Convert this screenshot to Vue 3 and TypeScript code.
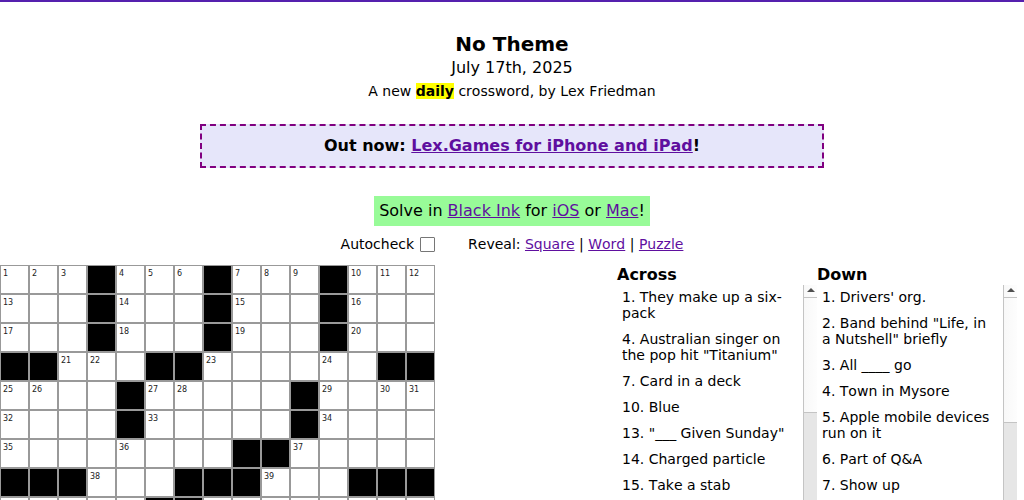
<template>
  <div class="page">
    <header class="head">
      <h1 class="title">No Theme</h1>
      <p class="date">July 17th, 2025</p>
      <p class="byline">A new <b class="daily">daily</b> crossword, by Lex Friedman</p>
    </header>

    <div class="promo">Out now: <a href="#">Lex.Games for iPhone and iPad</a>!</div>

    <div class="solve">Solve in <a href="#">Black Ink</a> for <a href="#">iOS</a> or <a href="#">Mac</a>!</div>

    <div class="controls">
      <label class="autocheck">Autocheck <span class="check"></span></label>
      <span class="reveal">Reveal: <a href="#">Square</a> | <a href="#">Word</a> | <a href="#">Puzzle</a></span>
    </div>

    <div class="board">
      <div class="grid">
        <template v-for="(row, r) in rows" :key="r">
          <div
            v-for="(cell, c) in row"
            :key="c"
            class="cell"
            :class="{ black: cell === -1 }"
          >
            <span v-if="cell > 0" class="num">{{ cell }}</span>
          </div>
        </template>
      </div>

      <div class="clues">
        <section v-for="col in columns" :key="col.title" class="col">
          <h2 class="col-title">{{ col.title }}</h2>
          <div class="list-wrap">
            <div class="list">
              <p v-for="clue in col.clues" :key="clue" class="clue">{{ clue }}</p>
            </div>
            <div class="bar">
              <div class="thumb" :style="{ height: col.thumb + 'px' }">
                <span class="arrow"></span>
              </div>
            </div>
          </div>
        </section>
      </div>
    </div>
  </div>
</template>

<script setup lang="ts">
// 0 = empty white square, -1 = black square, otherwise the clue number
const rows: number[][] = [
  [1, 2, 3, -1, 4, 5, 6, -1, 7, 8, 9, -1, 10, 11, 12],
  [13, 0, 0, -1, 14, 0, 0, -1, 15, 0, 0, -1, 16, 0, 0],
  [17, 0, 0, -1, 18, 0, 0, -1, 19, 0, 0, -1, 20, 0, 0],
  [-1, -1, 21, 22, 0, -1, -1, 23, 0, 0, 0, 24, 0, -1, -1],
  [25, 26, 0, 0, -1, 27, 28, 0, 0, 0, -1, 29, 0, 30, 31],
  [32, 0, 0, 0, -1, 33, 0, 0, 0, 0, -1, 34, 0, 0, 0],
  [35, 0, 0, 0, 36, 0, 0, 0, -1, -1, 37, 0, 0, 0, 0],
  [-1, -1, -1, 38, 0, 0, -1, -1, -1, 39, 0, 0, -1, -1, -1],
  [0, 0, 0, 0, 0, -1, -1, 0, 0, 0, 0, 0, 0, 0, 0],
]

const columns = [
  {
    title: 'Across',
    thumb: 128,
    clues: [
      '1. They make up a six-pack',
      '4. Australian singer on the pop hit "Titanium"',
      '7. Card in a deck',
      '10. Blue',
      '13. "___ Given Sunday"',
      '14. Charged particle',
      '15. Take a stab',
    ],
  },
  {
    title: 'Down',
    thumb: 138,
    clues: [
      "1. Drivers' org.",
      '2. Band behind "Life, in a Nutshell" briefly',
      '3. All ____ go',
      '4. Town in Mysore',
      '5. Apple mobile devices run on it',
      '6. Part of Q&A',
      '7. Show up',
    ],
  },
]
</script>

<style scoped>
.page {
  border-top: 2px solid #5520ae;
  font-family: "DejaVu Sans", sans-serif;
  font-kerning: none;
  color: #000;
  display: flex;
  flex-direction: column;
  align-items: center;
}

.head {
  margin-top: 30px;
  text-align: center;
}

.title {
  margin: 0;
  font-size: 20px;
  line-height: 24px;
  font-weight: bold;
}

.date {
  margin: 1px 0 0;
  font-size: 16px;
  line-height: 22px;
}

.byline {
  margin: 3px 0 0;
  font-size: 14px;
  line-height: 18px;
}

.daily {
  background: #ffff00;
}

.promo {
  box-sizing: border-box;
  width: 624px;
  height: 44px;
  margin-top: 24px;
  border: 2px dashed #800080;
  background: #e6e6fa;
  font-size: 16px;
  font-weight: bold;
  line-height: 40px;
  text-align: center;
}

.solve {
  margin-top: 28px;
  padding: 5px;
  height: 20px;
  line-height: 20px;
  background: #98fb98;
  font-size: 16px;
}

a {
  color: #5f0f9f;
}

.controls {
  display: flex;
  gap: 33px;
  margin-top: 8px;
  height: 20px;
  align-items: center;
  font-size: 14px;
  line-height: 18px;
}

.autocheck {
  display: flex;
  align-items: center;
  gap: 6px;
}

.check {
  display: block;
  box-sizing: border-box;
  width: 15px;
  height: 15px;
  border: 1px solid #767676;
  border-radius: 1px;
  background: #fff;
}

.board {
  align-self: stretch;
  display: flex;
  justify-content: space-between;
  margin-top: 11px;
  padding-right: 7px;
}

.grid {
  display: grid;
  grid-template-columns: repeat(15, 29px);
  grid-auto-rows: 29px;
  width: 435px;
  height: 261px;
}

.cell {
  box-sizing: border-box;
  position: relative;
  border: 1px solid #999;
  background: #fff;
}

.cell.black {
  background: #000;
}

.num {
  position: absolute;
  top: 3px;
  left: 2px;
  font-size: 8px;
  line-height: 10px;
  color: #222;
}

.clues {
  display: flex;
}

.col {
  width: 200px;
}

.col-title {
  margin: 0;
  font-size: 16px;
  line-height: 20px;
  font-weight: bold;
}

.list-wrap {
  display: flex;
  height: 215px;
  overflow: hidden;
}

.list {
  flex: 1;
  min-width: 0;
}

.clue {
  margin: 0;
  padding: 4px 5px 6px;
  font-size: 14px;
  line-height: 16px;
}

.bar {
  box-sizing: border-box;
  width: 14px;
  border-left: 1px solid #c4c4c4;
  background: #e6e6e6;
}

.thumb {
  box-sizing: border-box;
  position: relative;
  border-bottom: 1px solid #c4c4c4;
  background: linear-gradient(to right, #f8f8f8, #fdfdfd);
}

.thumb::after {
  content: "";
  position: absolute;
  top: 12px;
  left: 0;
  right: 0;
  border-top: 1px solid #c4c4c4;
}

.arrow {
  position: absolute;
  top: 3px;
  left: 3px;
  width: 0;
  height: 0;
  border-left: 4px solid transparent;
  border-right: 4px solid transparent;
  border-bottom: 4px solid #505050;
}
</style>

<style>
html,
body {
  overflow: hidden;
  height: 500px;
}
</style>
